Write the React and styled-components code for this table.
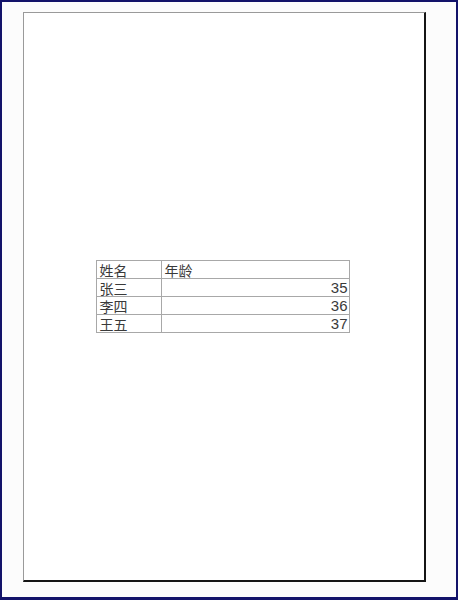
import React from "react";
import styled, { createGlobalStyle } from "styled-components";

const Global = createGlobalStyle`
  html, body { margin: 0; padding: 0; background: #fcfcfc; }
  #root { width: 458px; height: 600px; }
`;

const Frame = styled.div`
  box-sizing: border-box;
  width: 458px;
  height: 600px;
  border: 2px solid #13136a;
  border-bottom-width: 3px;
  background: #fcfcfc;
  padding: 10px 0 0 21px;
`;

const Page = styled.div`
  box-sizing: border-box;
  width: 403px;
  height: 570px;
  background: #ffffff;
  border-top: 1px solid #9a9a9a;
  border-left: 1px solid #9a9a9a;
  border-right: 2px solid #151515;
  border-bottom: 2px solid #151515;
  display: flex;
  align-items: center;
  justify-content: center;
  padding-right: 3px;
`;

const Table = styled.table`
  border-collapse: collapse;
  width: 254px;
  font-size: 14px;
  color: #3a3a3a;
  border: 1px solid #8c8c8c;
`;

const Cell = styled.td`
  box-sizing: border-box;
  border: 1px solid #a8a8a8;
  height: 18px;
  padding: 0 1px 0 3px;
  line-height: 16px;
  text-align: ${(p) => (p.$num ? "right" : "left")};
  width: ${(p) => (p.$first ? "65px" : "auto")};
  font-family: ${(p) => (p.$num ? '"Liberation Sans", sans-serif' : '"Noto Sans CJK SC", sans-serif')};
  font-size: ${(p) => (p.$num ? "15px" : "14px")};
`;

const rows = [
  ["张三", "35"],
  ["李四", "36"],
  ["王五", "37"],
];

export default function App() {
  return (
    <>
      <Global />
      <Frame>
        <Page>
          <Table>
            <tbody>
              <tr>
                <Cell $first>姓名</Cell>
                <Cell>年龄</Cell>
              </tr>
              {rows.map(([n, a]) => (
                <tr key={n}>
                  <Cell $first>{n}</Cell>
                  <Cell $num>{a}</Cell>
                </tr>
              ))}
            </tbody>
          </Table>
        </Page>
      </Frame>
    </>
  );
}
